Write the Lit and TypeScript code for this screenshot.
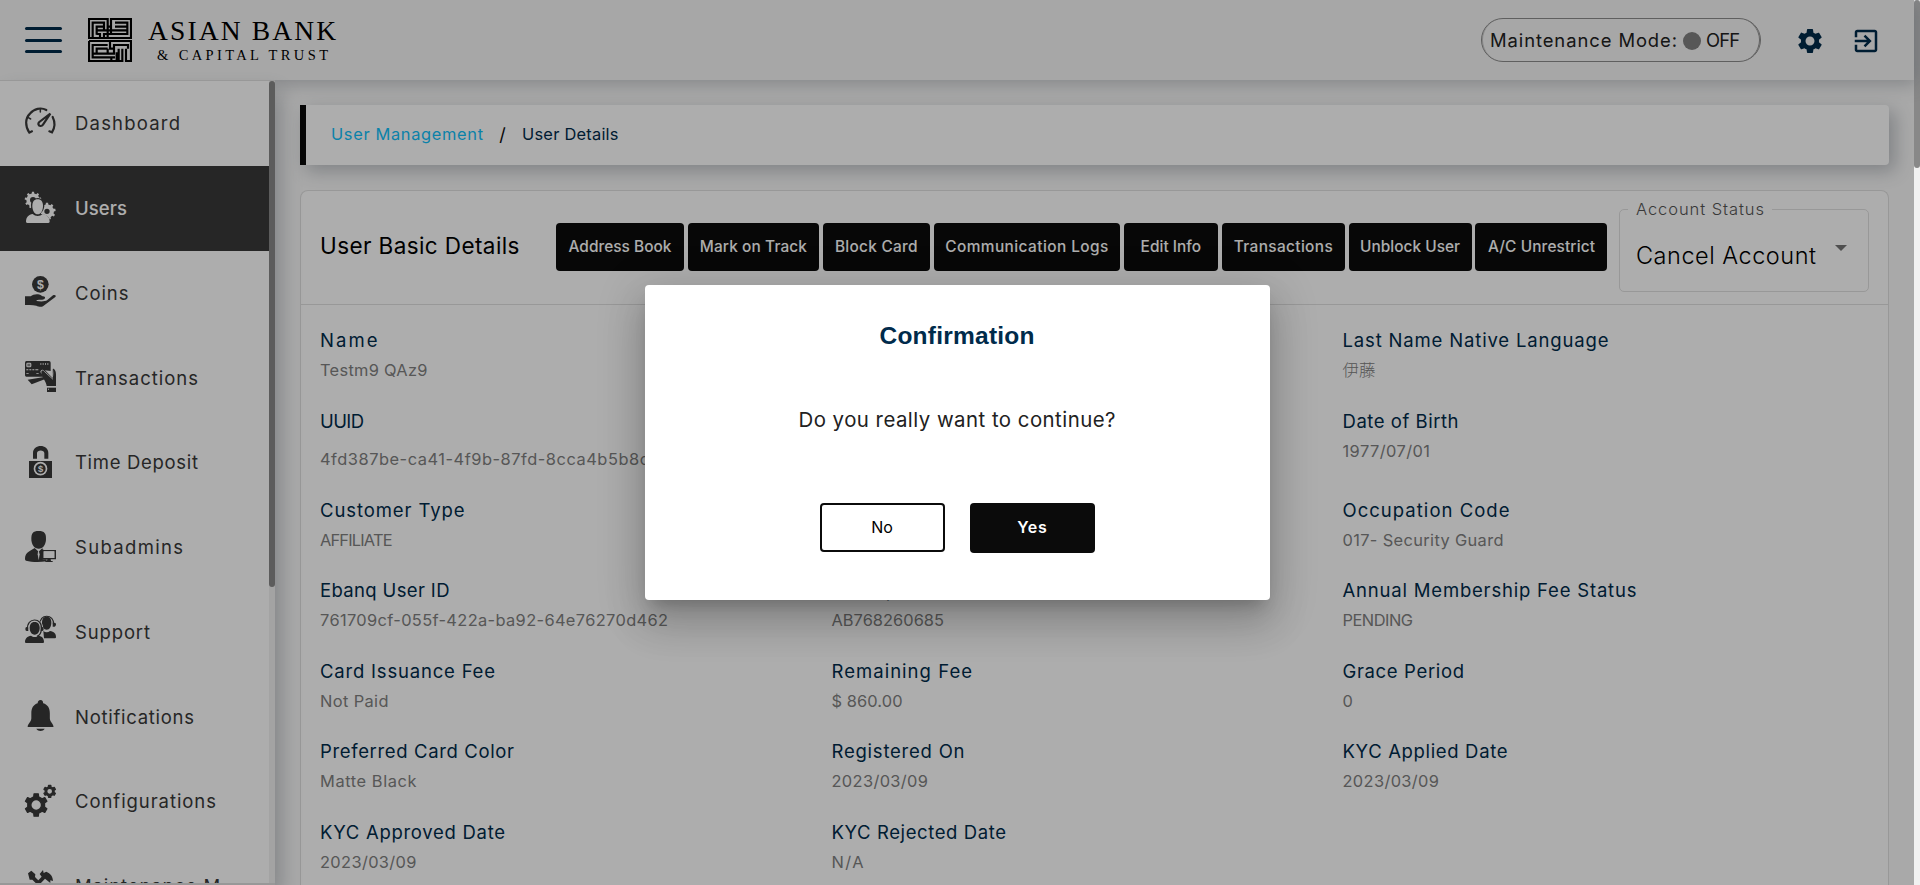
import { LitElement, html, css, svg, nothing } from "lit";
import { customElement, property, query, state } from "lit/decorators.js";
import { classMap } from "lit/directives/class-map.js";

/** Inline label whose tracking is adjusted so that the text spans `w` pixels. */
@customElement("track-text")
class TrackText extends LitElement {
  static styles = css`
    :host { display: inline-block; white-space: nowrap; }
  `;
  @property({ type: Number }) w = 0;
  @property() text = "";
  @state() private gap = 0;
  @query("span") private span!: HTMLSpanElement;

  firstUpdated() {
    const natural = this.span.getBoundingClientRect().width;
    const n = Math.max(1, this.text.length - 1);
    if (this.text.length > 2) this.gap = (this.w + 1 - natural) / n;
  }
  render() {
    return html`<span style="letter-spacing:${this.gap.toFixed(3)}px;margin-right:${(-this.gap).toFixed(3)}px">${this.text}</span>`;
  }
}

const t = (text: string, w: number) => html`<track-text .text=${text} .w=${w}></track-text>`;

function gear(cx: number, cy: number, r: number, teeth: number, hole: number, start = 0, root = 0.76) {
  const pts: string[] = [];
  const step = (Math.PI * 2) / teeth;
  const inner = r * root;
  for (let i = 0; i < teeth; i++) {
    const a = start + i * step - Math.PI / 2;
    const at = (ang: number, rad: number) =>
      `${(cx + Math.cos(ang) * rad).toFixed(2)} ${(cy + Math.sin(ang) * rad).toFixed(2)}`;
    pts.push(at(a - step * 0.27, inner), at(a - step * 0.18, r), at(a + step * 0.18, r), at(a + step * 0.27, inner));
  }
  return `M${pts.join("L")}ZM${cx - hole} ${cy}a${hole} ${hole} 0 1 0 ${hole * 2} 0a${hole} ${hole} 0 1 0 ${-hole * 2} 0Z`;
}

const icons = {
  dashboard: svg`
    <g fill="none" stroke="currentColor" stroke-width="6.500" stroke-linecap="round">
      <path d="M21 73l-8 4C0 58 0 34 15 20C27 5 48 0 64 9"/>
      <path d="M73 73l8 3c10-16 9-32 2-46"/>
      <path d="M46 6v9M10 32l7 4" stroke-width="4.500"/>
      <path d="M76 20L54 53c-4 6-13 5-14-2c0-2 1-4 3-6Z"/>
    </g>`,
  users: svg`
    <path fill-rule="evenodd" d="${gear(24, 24, 25, 9, 9, 0, 0.8)}"/>
    <path fill-rule="evenodd" d="${gear(66, 58, 26, 9, 8, 0, 0.8)}"/>
    <path class="cut" d="M39 18c13 0 20 12 19 25c-1 9-5 16-10 20v3c15 2 27 7 28 27H0c0-20 12-26 27-28v-3c-6-5-9-12-9-21C17 29 25 18 39 18Z"/>
    <path d="M38 22c11 0 16 8 16 20c0 14-7 25-16 25s-16-11-16-25c0-12 5-20 16-20Z"/>
    <path d="M23 66c8 8 22 8 30 0c12 2 20 8 21 22c0 3-1 5-4 5H7c-3 0-4-2-4-5c1-14 8-20 20-22Z"/>`,
  coins: svg`
    <circle cx="46" cy="25" r="25"/>
    <text class="cut sign" x="46" y="38" font-size="37">$</text>
    <path d="M0 61h17c8-7 23-9 33-2c6 4 13 0 9 9c-5 5-15 2-24 4v3c12 2 25 2 32-3L84 58c6-3 11 1 7 5L54 91c-6 3-14 1-20-2C24 86 12 87 0 87Z"/>`,
  transactions: svg`
    <path d="M4 0h68q5 0 5 5v25L52 27c-6 0-7 8-2 11l6 9H4q-4 0-4-4V5q0-5 4-5Z"/>
    <path d="M8 56l49-8l6 5L20 70Z"/>
    <path d="M50 26c5-3 9 0 12 4l21 21V36c-2-8-1-14 4-12c4 3 6 9 6 17v34H65c-1-12-12-22-16-38Z"/>
    <path d="M66 80h27v13H66Z"/>
    <g class="cut"><rect x="4" y="5" width="15" height="14" rx="4"/><path d="M4 25h6v3H4zM13 25h6v3h-6zM22 25h6v3h-6zM31 25h9v3h-9zM4 36h7v2H4zM34 36h7v2h-7zM46 7h3v4h-3zM53 7h3v4h-3zM60 7h3v4h-3zM67 7h3v4h-3zM69 83h3v3h-3z"/></g>
    <path d="M7 8h9v8H7z" opacity=".6"/>
    <path class="line" d="M47 31c4-6 9-3 12 1l25 23M80 23c5 3 4 20 2 26"/>`,
  deposit: svg`
    <path d="M24 38V21C24-7 70-7 70 21v17H58V22c0-11-22-11-22 0v16Z"/>
    <path d="M12 45h69v51H12Z"/>
    <circle class="cut" cx="46.500" cy="68" r="20.500"/><circle cx="46.500" cy="68" r="15.500"/>
    <text class="cut sign" x="46.500" y="78" font-size="28">$</text>`,
  subadmins: svg`
    <path d="M41 0c18 0 22 8 22 23c0 18-9 30-22 30S19 41 19 23C19 8 23 0 41 0Z"/>
    <path d="M29 51l12 11l11-11c0 6 5 6 8 6l-7 2v26h12v6c-20 3-45 3-62-2c-3-1-3-4-3-7c1-19 16-22 29-31Z"/>
    <path class="cut" d="M40 55l4 15l-3 18l-3-18Z"/>
    <path fill-rule="evenodd" d="M51 57h42v28H77l1 5h5v3H61v-3h5l1-5H51ZM56 61v20h32V61Z"/>
    <path class="cut" d="M56 61v20h32V61Z"/>`,
  support: svg`
    <g transform="translate(37 0)"><path d="M28 5c11 0 14 8 14 18S37 44 28 44S14 33 14 23S17 5 28 5Z"/><path class="arc" d="M8 30C4-5 52-5 49 30"/><path d="M46 23h6q4 0 4 5t-4 7h-6Z"/><path d="M18 48c6 5 14 5 20 0c12 2 18 7 18 19q0 3-3 3H20Z"/></g>
    <path class="cut" d="M28 13c22 0 26 15 26 32l-10 17c12 2 16 8 16 25H0V62l12-5Z"/>
    <path d="M29 21c11 0 15 8 15 18S39 59 29 59S14 49 14 39S18 21 29 21Z"/>
    <path class="arc" d="M8 43C3 6 54 6 49 42C49 56 44 61 36 64"/>
    <path d="M9 36H5q-4 0-4 6t4 6h5ZM48 36h4q4 0 4 6t-4 6h-5Z"/>
    <path d="M18 62c6 5 16 5 22 0c12 2 17 8 17 19q0 3-3 3H3q-3 0-3-3C0 70 7 64 18 62Z"/>`,
  bell: svg`
    <path d="M46.500 0c6 0 8 4 8 10c14 4 20 15 20 30v15c0 11 11 17 11 26H8c0-9 11-15 11-26V40c0-15 6-26 19-30c0-6 3-10 8.500-10Z"/>
    <path d="M34 86h25c-5 9-20 9-25 0Z"/>`,
  config: svg`
    <path fill-rule="evenodd" d="${gear(33.5, 60, 34, 6, 16, 0, 0.76)}" class="round"/>
    <path fill-rule="evenodd" d="${gear(74, 19, 18, 6, 9, 0, 0.76)}" class="round"/>`,
  tools: svg`
    <path d="M9 10l10-8l12 11l-1 8l28 28l-8 8l-28-28h-8Z"/>
    <path d="M44 12L54 0l2 9l8-4c12 5 20 14 20 28l-8-2v8L60 26L30 58l-8-8l28-30Z"/>`,
};

type IconName = keyof typeof icons;
const nav: Array<{ label: string; w: number; icon: IconName; active?: boolean }> = [
  { label: "Dashboard", w: 104, icon: "dashboard" },
  { label: "Users", w: 51, icon: "users", active: true },
  { label: "Coins", w: 52.5, icon: "coins" },
  { label: "Transactions", w: 122, icon: "transactions" },
  { label: "Time Deposit", w: 122, icon: "deposit" },
  { label: "Subadmins", w: 107, icon: "subadmins" },
  { label: "Support", w: 74, icon: "support" },
  { label: "Notifications", w: 118, icon: "bell" },
  { label: "Configurations", w: 140, icon: "config" },
  { label: "Maintenance M...", w: 163, icon: "tools" },
];

const actions: Array<[string, number, number]> = [
  ["Address Book", 102, 128], ["Mark on Track", 106, 131], ["Block Card", 81.5, 107],
  ["Communication Logs", 162, 186.5], ["Edit Info", 59.5, 94], ["Transactions", 98, 123],
  ["Unblock User", 99, 123], ["A/C Unrestrict", 106, 132],
];

type Field = [string, number, string, number] | null;
const rows: Array<{ tall?: boolean; cells: Field[] }> = [
  { cells: [["Name", 56.5, "Testm9 QAz9", 106.5], null, ["Last Name Native Language", 265, "伊藤", 32]] },
  { tall: true, cells: [["UUID", 43, "4fd387be-ca41-4f9b-87fd-8cca4b5b8c", 328], null, ["Date of Birth", 115, "1977/07/01", 86.5]] },
  { cells: [["Customer Type", 143.5, "AFFILIATE", 71.5], null, ["Occupation Code", 166, "017- Security Guard", 160]] },
  { cells: [["Ebanq User ID", 128.5, "761709cf-055f-422a-ba92-64e76270d462", 347], ["Description", 96, "AB768260685", 111.5], ["Annual Membership Fee Status", 293, "PENDING", 69.5]] },
  { cells: [["Card Issuance Fee", 174, "Not Paid", 67.5], ["Remaining Fee", 139.5, "$ 860.00", 70], ["Grace Period", 120.5, "0", 10]] },
  { cells: [["Preferred Card Color", 193, "Matte Black", 95.5], ["Registered On", 132, "2023/03/09", 95.5], ["KYC Applied Date", 164, "2023/03/09", 95.5]] },
  { cells: [["KYC Approved Date", 184, "2023/03/09", 95.5], ["KYC Rejected Date", 173.5, "N/A", 31], null] },
];

@customElement("app-root")
class AppRoot extends LitElement {
  static styles = css`
    :host {
      display: block; position: relative; width: 1920px; height: 885px; overflow: hidden;
      font-family: Inter, "Noto Sans CJK JP", sans-serif; color: #000; background: #f1f1f1;
    }
    * { box-sizing: border-box; }
    .page { display: flex; flex-direction: column; width: 1914px; height: 885px; background: #f9f9f9; }
    .header {
      flex: none; height: 80px; display: flex; align-items: center; padding: 0 33px 0 25px;
      background: #f7f7f7; position: relative; z-index: 3; box-shadow: 3px 3px 18px rgba(69, 80, 92, .33);
    }
    .burger { display: flex; flex-direction: column; gap: 8.300px; width: 37px; margin-right: 26px; }
    .burger i { height: 3px; border-radius: 2px; background: #002b4b; }
    .mark { width: 44px; height: 44px; display: block; margin-right: 16px; }
    .brand { display: flex; flex-direction: column; font-family: "Liberation Serif", serif; }
    .brand .big { font-size: 27.500px; line-height: 28px; height: 28px; }
    .brand .small { font-size: 14.500px; line-height: 16px; height: 16px; margin-top: 2px; padding-left: 9px; }
    .spacer { flex: 1; }
    .pill {
      width: 280px; height: 44px; border: 1px solid #8c8c8c; border-radius: 22px; display: flex; align-items: center;
      padding: 0 0 0 8px; font-size: 18.400px; color: #222; margin-right: 34px; box-shadow: inset 2px 0 0 -1px #c8c8c8, inset -2px 0 0 -1px #8c8c8c;
    }
    .dot { width: 18px; height: 18px; border-radius: 50%; background: #808080; margin: 1px 5px 0 6px; }
    .hicon { width: 30px; height: 30px; fill: #002b4b; display: block; margin-top: 1px; }
    .hicon + .hicon { margin-left: 26px; }
    .body { flex: 1; display: flex; min-height: 0; }
    .side { width: 275px; flex: none; display: flex; flex-direction: column; border-top: 1px solid #e0e0e0; position: relative; z-index: 4; background: #fff; box-shadow: 5px 12px 20px rgba(69, 80, 92, .33); }
    .scrollarea { flex: 1; display: flex; min-height: 0; }
    .list { width: 269px; overflow: hidden; }
    .track { width: 6px; background: #f1f1f1; }
    .thumb { height: 506px; border-radius: 3px; background: #888; }
    .foot { height: 2px; background: #e0e0e0; }
    .item { height: 84.750px; display: flex; align-items: center; padding-left: 25px; font-size: 18.500px; color: #393939; --bg: #fff; }
    .item.active { background: #393939; color: #fff; font-weight: 500; --bg: #393939; }
    .nicon { width: 31px; height: 31px; overflow: visible; margin: -2px 19px 0 0; fill: currentColor; }
    .cut { fill: var(--bg); }
    .line { fill: none; stroke: var(--bg); stroke-width: 2.500; }
    .arc { fill: none; stroke: currentColor; stroke-width: 3.500; }
    .round { stroke: currentColor; stroke-width: 4; stroke-linejoin: round; }
    .sign { font-family: "Liberation Sans", sans-serif; font-weight: 700; text-anchor: middle; }
    .main { flex: 1; padding: 25px 25px 0; display: flex; flex-direction: column; gap: 25px; min-width: 0; }
    .crumbs {
      flex: none; height: 60px; display: flex; align-items: center; background: #fff; border-left: 6px solid #0b0b0b; border-radius: 0 4px 4px 0;
      padding: 0 0 2px 25px; font-size: 16.400px; color: #002b4b; box-shadow: 6px 6px 18px rgba(69, 80, 92, .33);
    }
    .link { color: #10c0fa; }
    .slash { width: 39px; text-align: center; font-size: 18px; color: #0b0b0b; }
    .card { flex: 1; background: #fff; border: 1px solid #e0e0e0; border-bottom: 0; border-radius: 8px 8px 0 0; overflow: hidden; }
    .cardhead { height: 114px; border-bottom: 1px solid #e0e0e0; display: flex; align-items: center; padding: 0 19px 2px 19px; }
    .title { width: 236px; font-size: 22.500px; padding-bottom: 2px; }
    .btns { display: flex; gap: 3.850px; flex: 1; }
    .btn {
      flex: none; height: 48px; border-radius: 4px; background: #0b0b0b; color: #fff; font-size: 15.400px; font-weight: 500;
      display: flex; align-items: center; justify-content: center;
    }
    .select { width: 250px; height: 94px; margin: 0 0 3px; padding: 0 0 10px 8px; border: 1px solid #e0e0e0; border-radius: 5px; display: flex; flex-direction: column; min-inline-size: 0; }
    .select legend { padding: 0 8px; font-size: 16.500px; font-weight: 300; color: #555; line-height: 22px; height: 22px; }
    .value { flex: 1; display: flex; align-items: center; padding: 10px 21px 0 8px; justify-content: space-between; font-size: 23.500px; font-weight: 300; }
    .caret { width: 12px; height: 6px; fill: #757575; margin: -16px 0 0; }
    .details { padding: 22px 0 0 19px; display: flex; flex-direction: column; }
    .row { display: grid; grid-template-columns: 511.500px 511px 1fr; height: 80.500px; }
    .row.tall { height: 89.200px; }
    .k { font-size: 18.500px; line-height: 27px; color: #002b4b; }
    .v { font-size: 16.400px; line-height: 24px; color: #808080; padding-top: 4px; }
    .tall > :first-child .v { padding-top: 12px; }
    .row:first-child > :last-child .v { font-weight: 300; }
    .bar { position: absolute; left: 1914px; top: 0; width: 6px; height: 168px; border-radius: 3px; background: #888; }
    .scrim { position: absolute; left: 0; top: 0; width: 1914px; height: 885px; background: rgba(0, 0, 0, .32); z-index: 10; display: flex; align-items: center; justify-content: center; }
    .dialog {
      width: 625px; height: 315px; border-radius: 4px; background: #fff; display: flex; flex-direction: column; align-items: center;
      box-shadow: 0 11px 15px -7px rgba(0, 0, 0, .2), 0 24px 38px 3px rgba(0, 0, 0, .14), 0 9px 46px 8px rgba(0, 0, 0, .12);
    }
    .dialog h2 { margin: 35px 0 0; font: 700 24.500px/32px "Liberation Sans", sans-serif; color: #002b4b; }
    .dialog p { margin: 53px 0 0; font-size: 20.400px; line-height: 30px; color: #212121; }
    .choice { display: flex; gap: 25px; margin-top: 68px; }
    .choice .btn, .no { width: 125px; height: 50px; font-size: 16px; font-weight: 600; padding-bottom: 2px; }
    .no { border: 2px solid #0b0b0b; border-radius: 4px; height: 49px; background: #fff; display: flex; align-items: center; justify-content: center; font-weight: 400; }
  `;

  private field(f: Field) {
    return html`<div>${f ? html`<div class="k">${t(f[0], f[1])}</div><div class="v">${t(f[2], f[3])}</div>` : nothing}</div>`;
  }

  render() {
    return html`
      <div class="page">
        <div class="header">
          <div class="burger"><i></i><i></i><i></i></div>
          <svg class="mark" viewBox="0 0 132 132" fill="none" stroke="#000" stroke-width="6.500">
            <path d="M3 63V3H59V26H69V3H129V60H3M14 63V14H48V37H26M26 50V26H48M59 26V60M69 26V48M48 37H82M81 14H118V48H69M81 26H118M81 37H118M26 48H36V60M48 60V48H69"/>
            <path d="M3 69H129V132M3 69V129H70V118H14V81H59M59 92H26V107H59V92M66 69V92H78V81H120V92M70 107H14M81 118H70V129H86V103M92 92V129H103V92M114 92V129H129M78 81V107H59"/>
          </svg>
          <div class="brand"><div class="big">${t("ASIAN BANK", 187)}</div><div class="small">${t("& CAPITAL TRUST", 170)}</div></div>
          <div class="spacer"></div>
          <div class="pill">${t("Maintenance Mode:", 186)}<span class="dot"></span>${t("OFF", 33)}</div>
          <svg class="hicon" viewBox="0 0 24 24"><path d="M19.140 12.940c.04-.3.060-.61.060-.94 0-.32-.02-.64-.07-.94l2.030-1.580c.18-.14.230-.41.120-.61l-1.920-3.320c-.12-.22-.37-.29-.59-.22l-2.390.96c-.5-.38-1.030-.7-1.620-.94l-.36-2.540c-.04-.24-.24-.41-.48-.41h-3.840c-.24 0-.43.17-.47.41l-.36 2.540c-.59.24-1.130.57-1.620.94l-2.390-.96c-.22-.08-.47 0-.59.22L2.740 8.870c-.12.21-.08.47.12.61l2.030 1.580c-.05.3-.09.63-.09.94s.02.64.070.94l-2.030 1.580c-.18.14-.23.41-.12.61l1.920 3.320c.12.22.37.29.59.22l2.390-.96c.5.38 1.030.7 1.620.94l.36 2.540c.05.24.24.41.48.41h3.840c.24 0 .44-.17.47-.41l.36-2.540c.59-.24 1.130-.56 1.620-.94l2.390.96c.22.08.47 0 .59-.22l1.920-3.320c.12-.22.070-.47-.12-.61l-2.010-1.580zM12 15.600c-1.980 0-3.600-1.620-3.600-3.600s1.620-3.600 3.600-3.600 3.600 1.620 3.600 3.600-1.620 3.600-3.600 3.600z"/></svg>
          <svg class="hicon" viewBox="0 0 24 24"><path d="M10.090 15.590L11.500 17l5-5-5-5-1.410 1.410L12.670 11H3v2h9.670l-2.580 2.590zM19 3H5c-1.110 0-2 .9-2 2v4h2V5h14v14H5v-4H3v4c0 1.100.89 2 2 2h14c1.100 0 2-.9 2-2V5c0-1.100-.9-2-2-2z"/></svg>
        </div>
        <div class="body">
          <div class="side">
            <div class="scrollarea">
              <div class="list">
                ${nav.map((n) => html`<div class=${classMap({ item: true, active: !!n.active })}>
                  <svg class="nicon" viewBox="0 0 93 93">${icons[n.icon]}</svg>${t(n.label, n.w)}
                </div>`)}
              </div>
              <div class="track"><div class="thumb"></div></div>
            </div>
            <div class="foot"></div>
          </div>
          <div class="main">
            <div class="crumbs"><span class="link">${t("User Management", 151)}</span><span class="slash">/</span>${t("User Details", 95.5)}</div>
            <div class="card">
              <div class="cardhead">
                <div class="title">${t("User Basic Details", 198.5)}</div>
                <div class="btns">${actions.map(([label, w, bw]) => html`<div class="btn" style="width:${bw}px">${t(label, w)}</div>`)}</div>
                <fieldset class="select">
                  <legend>${t("Account Status", 127)}</legend>
                  <div class="value">${t("Cancel Account", 179)}<svg class="caret" viewBox="0 0 12 6"><path d="M0 0h12L6 6Z"/></svg></div>
                </fieldset>
              </div>
              <div class="details">
                ${rows.map((r) => html`<div class=${classMap({ row: true, tall: !!r.tall })}>${r.cells.map((c) => this.field(c))}</div>`)}
              </div>
            </div>
          </div>
        </div>
      </div>
      <div class="bar"></div>
      <div class="scrim">
        <div class="dialog" role="dialog">
          <h2>${t("Confirmation", 154)}</h2>
          <p>${t("Do you really want to continue?", 316)}</p>
          <div class="choice"><div class="no">${t("No", 22)}</div><div class="btn">${t("Yes", 28.5)}</div></div>
        </div>
      </div>
    `;
  }
}
